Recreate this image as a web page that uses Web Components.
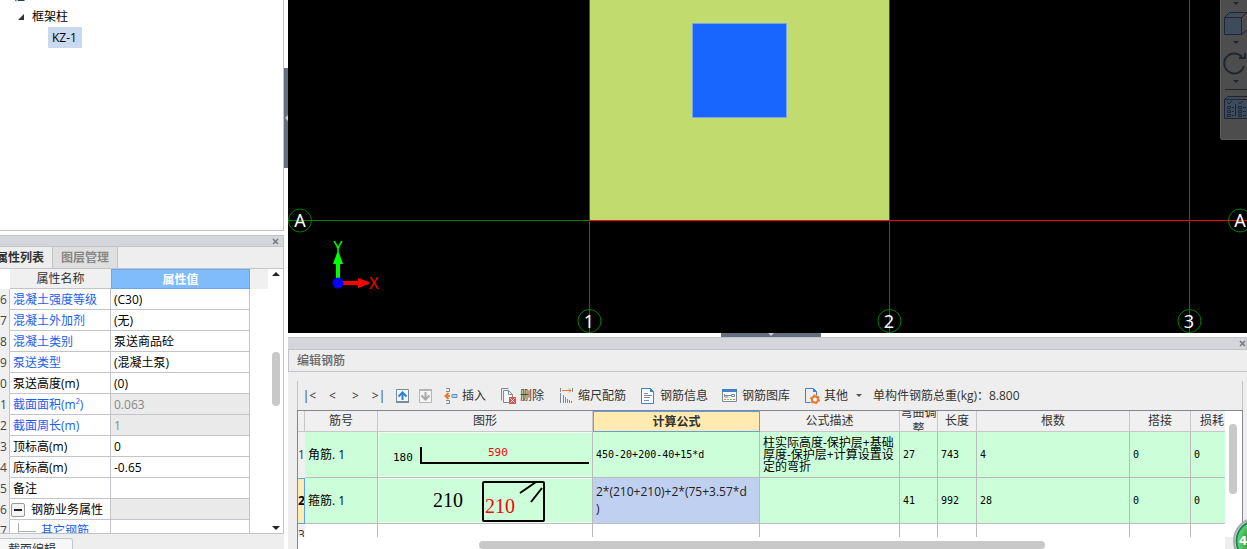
<!DOCTYPE html>
<html lang="zh-CN">
<head>
<meta charset="utf-8">
<title>编辑钢筋</title>
<style>
html,body{margin:0;height:100%}
body{font:12px/16px "Open Sans","Noto Sans CJK SC",sans-serif;color:#333;background:#fff;overflow:hidden}
</style>
</head>
<body>
<app-shell>
  <component-tree slot="tree"></component-tree>
  <dock-panel slot="props"><property-list></property-list></dock-panel>
  <model-view slot="model"></model-view>
  <dock-panel slot="rebar"><rebar-editor></rebar-editor></dock-panel>
</app-shell>
<script>
const define = (name, html, setup) => customElements.define(name, class extends HTMLElement {
  constructor() {
    super();
    const root = this.attachShadow({ mode: 'open' });
    const t = document.createElement('template');
    t.innerHTML = '<style>:host,*{box-sizing:border-box}button{font:inherit;color:inherit;background:none;border:0;padding:0;margin:0}</style>' + html;
    root.append(t.content.cloneNode(true));
    if (setup) setup.call(this, root);
  }
});

const ICONS = {
  up: '<path d="M2.500 1.500h12v13h-12z" fill="#f4f8fc" stroke="#7b8b99"/><path d="M2 14h13" stroke="#7b8b99" stroke-width="2"/><path d="M8.500 12V5M4.500 8.500l4-4 4 4" fill="none" stroke="#2f7fd6" stroke-width="2"/>',
  down: '<path d="M2.500 1.500h12v13h-12z" fill="#f4f4f4" stroke="#b4b4b4"/><path d="M2 2h13" stroke="#b4b4b4" stroke-width="2"/><path d="M8.500 4v7M4.500 7.500l4 4 4-4" fill="none" stroke="#a8a8a8" stroke-width="2"/>',
  insert: '<path d="M4 .5h3.500v3H4M4 12.500h3.500v3H4" fill="none" stroke="#7b8b99"/><path d="M3 8h5M6.500 5L3.500 8l3 3" fill="none" stroke="#ee7a2c" stroke-width="2"/><path d="M10 6.500h5v3h-5z" fill="#b9d6f3" stroke="#5c93cc"/>',
  del: '<path d="M1.500 12.500v-12h7" fill="none" stroke="#7b8b99"/><path d="M3.500 14.500v-12h5l4 4v8z" fill="#f7f7f7" stroke="#7b8b99"/><path d="M8.500 2.500v4h4" fill="none" stroke="#7b8b99"/><path d="M9 9h7v7H9z" fill="#d9534f"/><path d="M10.500 10.500l4 4M14.500 10.500l-4 4" stroke="#fff"/>',
  scale: '<path d="M2.500 0v4M2.500 5v10M14.500 0v4" stroke="#7b8b99"/><path d="M4 2.500h9M11 .5l2 2-2 2" fill="none" stroke="#ee7a2c"/><path d="M5.500 7v8M7.500 9v6M9.500 11v4M11.500 12v3M13.500 13v2" stroke="#7b8b99"/>',
  info: '<path d="M1.500 .5h9l3 3v12h-12z" fill="#f8fbff" stroke="#3c82cf"/><path d="M10 0l4 4h-4z" fill="#3c82cf"/><path d="M4 5.500h4M4 7.500h8M4 9.500h6M4 12.500h5" stroke="#7b8b99"/>',
  lib: '<path d="M.5 1.500h14v12H.5z" fill="#f8f8f8" stroke="#7b8b99"/><path d="M0 1h15v3H0z" fill="#3c82cf"/><path d="M2.500 6v3h4M3 7.500h7M9.500 6.500h3v2h-3z" fill="none" stroke="#7b8b99"/><path d="M2 11.500h2M11 11.500h2" stroke="#ee7a2c"/><path d="M5 11.500h2M8 11.500h2" stroke="#7fba5a"/>',
  other: '<path d="M1.500 .5h8l3 3v4M1.500 .5v14h5" fill="none" stroke="#3c82cf"/><path d="M9 0l4 4H9z" fill="#3c82cf"/><circle cx="11" cy="11.500" r="3" fill="#fff" stroke="#ee7a2c" stroke-width="2"/><circle cx="11" cy="11.500" r="4" fill="none" stroke="#ee7a2c" stroke-width="2" stroke-dasharray="2 2.190"/>'
};

define('tool-icon', `<style>:host{display:block;width:16px;height:16px}svg{display:block}</style><svg width="16" height="16" viewBox="0 0 16 16"></svg>`,
  function (root) { root.querySelector('svg').innerHTML = ICONS[this.getAttribute('name')]; });

define('tool-button', `<style>:host{display:block}button{display:flex;align-items:center;gap:4px;height:20px;white-space:nowrap}</style>
<button type="button"><tool-icon></tool-icon><slot></slot></button>`,
  function (root) {
    const icon = document.createElement('template');
    icon.innerHTML = '<tool-icon name="' + this.getAttribute('icon') + '"></tool-icon>';
    root.querySelector('tool-icon').replaceWith(icon.content);
  });

define('app-shell', `<style>
:host{display:flex;height:100vh;position:relative;overflow:hidden}
.left{width:284px;flex:none;display:flex;flex-direction:column}
.left slot[name=tree]::slotted(*){flex:1;min-height:0}
.left slot[name=props]::slotted(*){height:299px;margin-top:4px}
.split{width:4px;flex:none;padding-top:68px}
.split button{display:block;width:4px;height:100px;background:#66707c}
svg{display:block}
.right{flex:1;min-width:0;display:flex;flex-direction:column}
.right slot[name=model]::slotted(*){flex:1;min-height:0}
.right slot[name=rebar]::slotted(*){height:212px}
.hs{display:flex;justify-content:center;height:4px}
.hs button{width:100px;height:4px;background:#66707c;margin-left:7px}
.tabs{height:15px;background:#eee;overflow:hidden;padding-top:4px}
.tabs button{display:block;width:73px;height:24px;border:1px solid #c0c6d2;border-left:0;border-radius:0 3px 0 0;background:#f7f7f7;padding-right:8px}
.badge{position:absolute;right:-34px;bottom:-16px;width:48px;height:48px;border-radius:24px;border:2px solid #aaa;background:radial-gradient(circle,#3aa84c 12px,#62cf72 19px,#168a52 20px,#168a52 21px,#eee 22px);color:#fff;font:bold 12px/44px "DejaVu Sans",sans-serif;padding-left:4px;text-align:left}
</style>
<div class="left"><slot name="tree"></slot><slot name="props"></slot><div class="tabs"><button type="button">截面编辑</button></div></div>
<div class="split"><button type="button" aria-label="收起"><svg width="4" height="100"><path d="M4 47v6l-3-3z" fill="#c8ccd0"/></svg></button></div>
<div class="right"><slot name="model"></slot><div class="hs"><button type="button" aria-label="收起"><svg width="100" height="4"><path d="M47 0h6l-3 3z" fill="#c8ccd0"/></svg></button></div><slot name="rebar"></slot></div>
<button class="badge" type="button">4</button>`);

define('component-tree', `<style>
:host{display:block;background:#fff;border-right:1px solid #c3c4c9;border-bottom:1px solid #c3c4c9;overflow:hidden;color:#000}
ul{list-style:none;margin:0;padding:0}
.root{margin-top:-15px;line-height:21px}
.root>li{padding-left:13px}
.g{display:flex;align-items:center;gap:8px;padding-left:5px}
.g svg{display:block}
.leaf{margin-left:35px}
.leaf span{display:inline-block;background:#c9d9f0;padding:0 5px 0 4px;line-height:21px}
</style>
<ul class="root"><li>柱<ul><li><div class="g"><svg width="6" height="6"><path d="M6 0v6H0z" fill="#333"/></svg>框架柱</div><ul class="leaf"><li><span>KZ-1</span></li></ul></li></ul></li></ul>`);

define('dock-panel', `<style>
:host{display:flex;flex-direction:column;background:#eee;border-top:1px solid #c3c4c9;min-width:0}
.bar{flex:none;height:11px;background:#d5d6db;border-bottom:1px solid #c3c4c9;border-right:1px solid #c3c4c9;display:flex;justify-content:flex-end;align-items:center;padding-right:4px}
:host([slot=rebar]) .bar{height:12px;padding-right:0}
svg{display:block}
slot{display:block;flex:1;min-height:0}
</style><div class="bar"><button type="button" aria-label="关闭"><svg width="8" height="7"><path d="M2 1l5 5M7 1L2 6" stroke="#777" stroke-width="1.500"/></svg></button></div><slot></slot>`);

define('property-list', `<style>
:host{display:flex;flex-direction:column;height:100%;border-right:1px solid #c3c4c9;border-bottom:1px solid #c3c4c9}
.tabs{display:flex;height:22px;flex:none;border-bottom:1px solid #c3c4c9}
.tabs button{height:21px;border-right:1px solid #c3c4c9;font-weight:bold;display:flex;justify-content:flex-end;align-items:center;padding-right:8px;overflow:hidden;white-space:nowrap;width:53px}
.tabs button+button{background:#dfdfdf;color:#888;width:65px}
.body{flex:1;min-height:0;display:flex;background:#fff;overflow:hidden}
.view{flex:1;min-width:0;overflow:hidden}
table{border-collapse:separate;border-spacing:0;table-layout:fixed;width:100%}
th,td{height:21px;padding:2px 0 0 3px;border-right:1px solid #c3c4c9;border-bottom:1px solid #c3c4c9;line-height:16px;text-align:left;font-weight:normal;color:#000;white-space:nowrap;overflow:hidden}
tbody th{border-bottom-color:#f0f0f0;background:#f0f0f0;color:#444;padding-left:0}
thead th{height:20px;text-align:center;padding:1px 0 0;background:#f0f0f0;color:#333;border-right:0}
thead th:first-child{background:#fff;border-color:#fff}
thead th:nth-child(3){background:#80bbfb;color:#fff;font-weight:bold;border:1px solid #6ca6ea}
thead th:last-child{border-bottom-color:#f0f0f0}
tbody td:last-child{border:0}
tbody .b{color:#1a5ef0}
tbody .g{background:#eaeaea;color:#888}
.grp{display:flex;align-items:center;gap:6px;margin-left:-2px}
.grp button{width:14px;height:14px;border:1px solid #999;border-radius:2px;background:#f4f4f4;display:grid;place-items:center}
.grp button svg{display:block}
.sub{display:flex;gap:5px;margin-left:5px}
.sub svg{flex:none;display:block}
.sb{width:15px;flex:none;display:flex;flex-direction:column;align-items:center;padding:3px 0}
.sb i{width:8px;height:54px;border-radius:4px;background:#c8c8c8;margin-top:76px;margin-bottom:auto}
</style>
<div class="tabs"><button type="button">属性列表</button><button type="button">图层管理</button></div>
<div class="body"><div class="view"><table><colgroup><col style="width:10px"><col style="width:101px"><col style="width:139px"><col></colgroup>
<thead><tr><th></th><th>属性名称</th><th>属性值</th><th></th></tr></thead><tbody></tbody></table></div>
<div class="sb"><svg width="8" height="4"><path d="M0 4h8L4 0z" fill="#222"/></svg><i></i><svg width="8" height="4"><path d="M0 0h8L4 4z" fill="#222"/></svg></div></div>`,
  function (root) {
    const rows = [
      ['6', '混凝土强度等级', '(C30)', 'b'], ['7', '混凝土外加剂', '(无)', 'b'], ['8', '混凝土类别', '泵送商品砼', 'b'],
      ['9', '泵送类型', '(混凝土泵)', 'b'], ['0', '泵送高度(m)', '(0)', ''], ['1', '截面面积(m²)', '0.063', 'b', 'g'],
      ['2', '截面周长(m)', '1', 'b', 'g'], ['3', '顶标高(m)', '0', ''], ['4', '底标高(m)', '-0.65', ''], ['5', '备注', '', ''],
      ['6', '<div class="grp"><button type="button" aria-label="折叠"><svg width="8" height="2"><path d="M0 1h8" stroke="#222" stroke-width="2"/></svg></button>钢筋业务属性</div>', '', '', 'g'],
      ['7', '<div class="sub"><svg width="18" height="16"><path d="M.5 0v16M.5 8.500H18" stroke="#b0b0b0" fill="none"/></svg><span>其它钢筋</span></div>', '', 'b']];
    root.querySelector('tbody').innerHTML = rows.map(r => `<tr><th>${r[0]}</th><td class="${r[3]}">${r[1]}</td><td class="${r[4] || ''}">${r[2]}</td><td></td></tr>`).join('');
  });

define('model-view', `<style>
:host{display:block;position:relative;background:#000;overflow:hidden}
.scene{display:block;width:100%;height:100%}
text{font-family:"Noto Sans","Open Sans",sans-serif}
.tools{position:absolute;top:0;right:0;width:27px;height:140px;background:#4d4d4d;border-radius:0 0 0 3px;border:1px solid #5c5c5c;border-width:0 0 1px 1px;overflow:hidden}
.tools svg{display:block}
</style>
<svg class="scene">
<path d="M302 0h299v220H302z" fill="#c1db6f"/>
<path d="M404.500 23.500h94v94h-94z" fill="#1966ff" stroke="#7ba5ea"/>
<g fill="none" stroke="#008000" shape-rendering="crispEdges">
<path d="M0 220.500H301M301.500 220v113M601.500 221v112M901.500 221v112"/>
</g>
<g fill="none" stroke="#f00" shape-rendering="crispEdges"><path d="M301.500 0v220M601.500 0v220M302 220.500h700M901.500 0v220"/></g>
<g fill="none" stroke="#008000"><circle cx="12" cy="220.500" r="11.500"/><circle cx="301.500" cy="321" r="11.500"/><circle cx="601.500" cy="321" r="11.500"/><circle cx="901.500" cy="321" r="11.500"/><circle cx="952" cy="220.500" r="11.500"/></g>
<g fill="#fff" font-size="18" text-anchor="middle"><text x="12" y="227">A</text><text x="952" y="227">A</text><text x="301" y="328">1</text><text x="601" y="328">2</text><text x="901" y="328">3</text></g>
<path d="M48 278v-14h-3l4-11h2l4 11h-3v14z" fill="#0f0"/><path d="M54 281h16v-3l11 4v2l-11 4v-3H54z" fill="#f00"/><circle cx="50" cy="283" r="5.500" fill="#00f"/>
<g text-anchor="middle" font-size="16"><text x="50" y="253" fill="#0f0">Y</text><text x="86" y="289" fill="#f00">X</text></g>
</svg>
<div class="tools"><svg width="40" height="140" fill="none" stroke="#1e2731">
<g fill="#1e2731" stroke="none"><path d="M12 2h6l-3 3zM12 41h6l-3 3zM12 80h6l-3 3z"/></g>
<path d="M3.500 17.500h17v17h-17zM3.500 17.500l5-5h18M20.500 17.500l5-5M20.500 34.500l6-5" fill="#3e4b5c"/>
<path d="M21 57a10 10 0 1 0 2 9" stroke-width="2"/><path d="M24 53v5h-6" stroke-width="2"/>
<path d="M4 89.500h30"/>
<path d="M3.500 99.500h25v19h-25zM3.500 99.500l3-3h22" fill="#3e4b5c"/><path d="M14.500 104v12"/>
<path d="M6 102l2 2 3-3M17 102l2 2 3-3M6.500 106.500h3v2h-3zM6.500 110.500h3v2h-3zM6.500 114.500h3v2h-3zM17.500 106.500h3v2h-3zM17.500 110.500h3v2h-3zM17.500 114.500h3v2h-3zM11 107.500h2M11 111.500h2M11 115.500h2M22 107.500h3M22 111.500h3M22 115.500h3"/>
</svg></div>`);

define('rebar-editor', `<style>
:host{display:flex;flex-direction:column;height:100%;overflow:hidden}
h2{margin:0;height:22px;flex:none;border-bottom:1px solid #c3c4c9;border-left:1px solid #c3c4c9;padding-left:8px;font:inherit;font-weight:500;line-height:21px;color:#666}
.body{flex:1;min-height:0;display:flex;flex-direction:column;padding:9px 4px 0 9px}
.bar{height:29px;flex:none;display:flex;align-items:center;gap:14px;border:1px solid #c3c4c9;border-width:0 1px;white-space:nowrap}
.nav{display:flex;margin-right:-8px}
.nav button{width:23px;height:20px;display:grid;place-items:center}
.more{margin:0 -3px 0 -6px}
.more svg{display:block}
.box{flex:1;min-height:0;display:flex;flex-direction:column;background:#fff;border:1px solid #85858f;border-bottom:0}
.view{flex:1;min-height:0;display:flex}
.scroll{flex:1;min-width:0;overflow:hidden}
table{border-collapse:separate;border-spacing:0;table-layout:fixed;width:936px}
th,td{padding:0 0 0 3px;border-right:1px solid #bbb;border-bottom:1px solid #bbb;overflow:hidden;text-align:left;font-weight:normal;color:#000}
thead th{height:21px;padding:0;background:#f0f0f0;color:#333;text-align:center;border-color:#c8c8c8}
thead th div{height:20px;overflow:hidden;display:grid;place-content:center;line-height:16px}
thead .on{background:#ffebb0;font-weight:bold;border:1px solid #5fa0e6}
thead .on div{height:18px}
tbody tr{height:46px;background:#ccffd9}
tbody th{background:#f0f0f0;padding:0;color:#333;border-bottom-color:#f0f0f0;overflow:hidden;border-right-color:#f0f0f0}
tbody .cur th{background:#ffebb0;border:1px solid #5fa0e6;border-left:0;font-weight:bold;color:#000}
tbody .new{height:22px;background:#fff}
.n{font:10px/16px "DejaVu Sans Mono",monospace}
.d{line-height:12px}
.pic{padding:0}
.pic svg{display:block;width:215px;height:45px;box-shadow:inset 0 0 0 1px #eefff2}
.edit{background:#c0d0f0;line-height:17px;vertical-align:top;padding-top:5px;color:#222;white-space:nowrap}
.vs{width:17px;flex:none;padding:13px 5px 0 4px}
.vs i{display:block;height:70px;border-radius:4px;background:#c8c8c8}
.foot{height:12px;flex:none;display:flex;justify-content:space-between;align-items:flex-end}
.foot i{width:566px;height:8px;border-radius:4px;background:#c8c8c8;margin-left:181px}
.foot b{width:17px;height:12px;background:#eee}
</style>
<h2>编辑钢筋</h2>
<div class="body">
<div class="bar">
<div class="nav"><button type="button">|&lt;</button><button type="button">&lt;</button><button type="button">&gt;</button><button type="button">&gt;|</button><button type="button" aria-label="上移"><tool-icon name="up"></tool-icon></button><button type="button" aria-label="下移"><tool-icon name="down"></tool-icon></button></div>
<tool-button icon="insert">插入</tool-button><tool-button icon="del">删除</tool-button><tool-button icon="scale">缩尺配筋</tool-button><tool-button icon="info">钢筋信息</tool-button><tool-button icon="lib">钢筋图库</tool-button><tool-button icon="other">其他</tool-button>
<button class="more" type="button" aria-label="更多"><svg width="6" height="3"><path d="M0 0h6L3 3z" fill="#555"/></svg></button>
<span>单构件钢筋总重(kg)：8.800</span>
</div>
<div class="box"><div class="view"><div class="scroll"><table>
<colgroup><col style="width:7px"><col style="width:73px"><col style="width:215px"><col style="width:167px"><col style="width:140px"><col style="width:38px"><col style="width:39px"><col style="width:153px"><col style="width:61px"><col style="width:43px"></colgroup>
<thead><tr><th></th><th><div>筋号</div></th><th><div>图形</div></th><th class="on"><div>计算公式</div></th><th><div>公式描述</div></th><th><div>弯曲调整</div></th><th><div>长度</div></th><th><div>根数</div></th><th><div>搭接</div></th><th><div>损耗</div></th></tr></thead>
<tbody>
<tr><th>1</th><td>角筋. 1</td><td class="pic"><svg><path d="M43 15v16h168" fill="none" stroke="#000" stroke-width="2"/><g font-family="DejaVu Sans Mono" font-size="11"><text x="15" y="29">180</text><text x="110" y="24" fill="#f00">590</text></g></svg></td><td class="n">450-20+200-40+15*d</td><td class="d">柱实际高度-保护层+基础厚度-保护层+计算设置设定的弯折</td><td class="n">27</td><td class="n">743</td><td class="n">4</td><td class="n">0</td><td class="n">0</td></tr>
<tr class="cur"><th>2</th><td>箍筋. 1</td><td class="pic"><svg><rect x="105" y="4" width="61" height="39" rx="1" fill="none" stroke="#000" stroke-width="2"/><path d="M142 15l16-11M153 24l11-14" stroke="#000" stroke-width="2"/><g font-family="Liberation Serif" font-size="20"><text x="55" y="29">210</text><text x="107" y="35" fill="#f00">210</text></g></svg></td><td class="edit">2*(210+210)+2*(75+3.57*d<br>)</td><td></td><td class="n">41</td><td class="n">992</td><td class="n">28</td><td class="n">0</td><td class="n">0</td></tr>
<tr class="new"><th>3</th><td></td><td></td><td></td><td></td><td></td><td></td><td></td><td></td><td></td></tr>
</tbody></table></div><div class="vs"><i></i></div></div>
<div class="foot"><i></i><b></b></div></div>
</div>`);
</script>
</body>
</html>
